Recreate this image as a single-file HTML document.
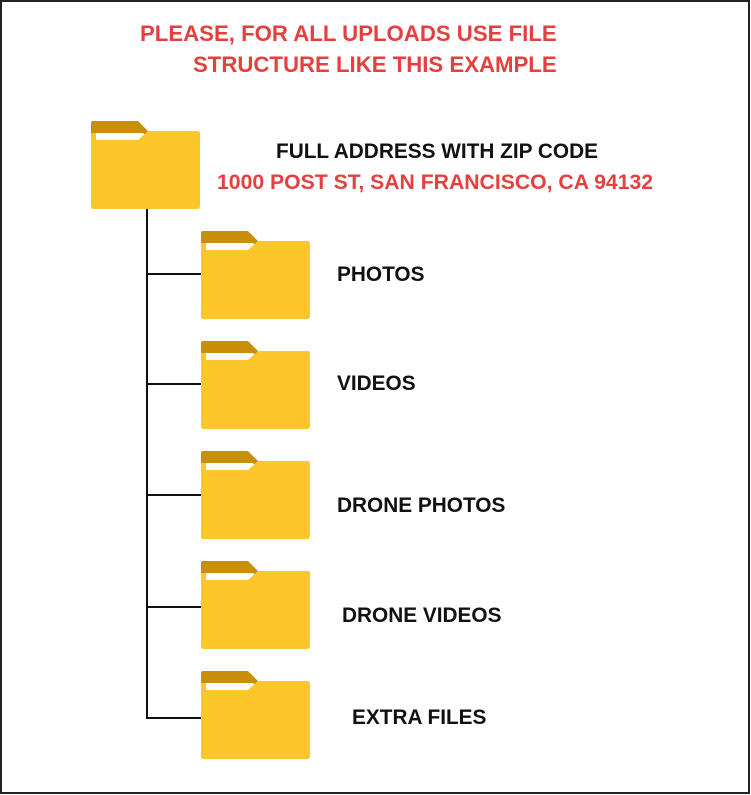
<!DOCTYPE html>
<html><head><meta charset="utf-8"><style>
html,body{margin:0;padding:0;background:#fff;}
body{width:751px;height:795px;position:relative;overflow:hidden;font-family:"Liberation Sans",sans-serif;font-weight:bold;}
.frame{position:absolute;left:0;top:0;width:746px;height:790px;border:2px solid #222;}
.t{position:absolute;white-space:nowrap;font-weight:bold;}
.red{color:#E5403F;}
.blk{color:#111;}
</style></head><body>
<div class="frame"></div>
<svg width="751" height="795" style="position:absolute;left:0;top:0">
<defs>
<g id="f">
<path d="M0,2 Q0,0 2,0 L47,0 L57,10 L57,13 L0,13 Z" fill="#C98F0B"/>
<path d="M5,12 L53,12 L47,19 L5,19 Z" fill="#fff"/>
<path d="M0,12 L5,12 L5,19 L47,19 L57,10 L107,10 Q109,10 109,13 L109,85 Q109,88 106,88 L3,88 Q0,88 0,85 Z" fill="#FDC62B"/>
</g>
</defs>
<g stroke="#111" stroke-width="2" fill="none">
<line x1="147" y1="209" x2="147" y2="719"/>
<line x1="147" y1="274" x2="201" y2="274"/>
<line x1="147" y1="384" x2="201" y2="384"/>
<line x1="147" y1="495" x2="201" y2="495"/>
<line x1="147" y1="607" x2="201" y2="607"/>
<line x1="147" y1="718" x2="201" y2="718"/>
</g>
<use href="#f" x="91" y="121"/>
<use href="#f" x="201" y="231"/>
<use href="#f" x="201" y="341"/>
<use href="#f" x="201" y="451"/>
<use href="#f" x="201" y="561"/>
<use href="#f" x="201" y="671"/>
</svg>
<div class="t red" style="left:140px;top:21px;font-size:22.2px;">PLEASE, FOR ALL UPLOADS USE FILE</div>
<div class="t red" style="left:193px;top:52px;font-size:22.2px;">STRUCTURE LIKE THIS EXAMPLE</div>
<div class="t blk" style="left:276px;top:140px;font-size:20.8px;">FULL ADDRESS WITH ZIP CODE</div>
<div class="t red" style="left:217px;top:171px;font-size:21.2px;">1000 POST ST, SAN FRANCISCO, CA 94132</div>
<div class="t blk" style="left:337px;top:263px;font-size:20.8px;">PHOTOS</div>
<div class="t blk" style="left:337px;top:372px;font-size:20.8px;">VIDEOS</div>
<div class="t blk" style="left:337px;top:494px;font-size:20.8px;">DRONE PHOTOS</div>
<div class="t blk" style="left:342px;top:604px;font-size:20.8px;">DRONE VIDEOS</div>
<div class="t blk" style="left:352px;top:706px;font-size:20.8px;">EXTRA FILES</div>
</body></html>
